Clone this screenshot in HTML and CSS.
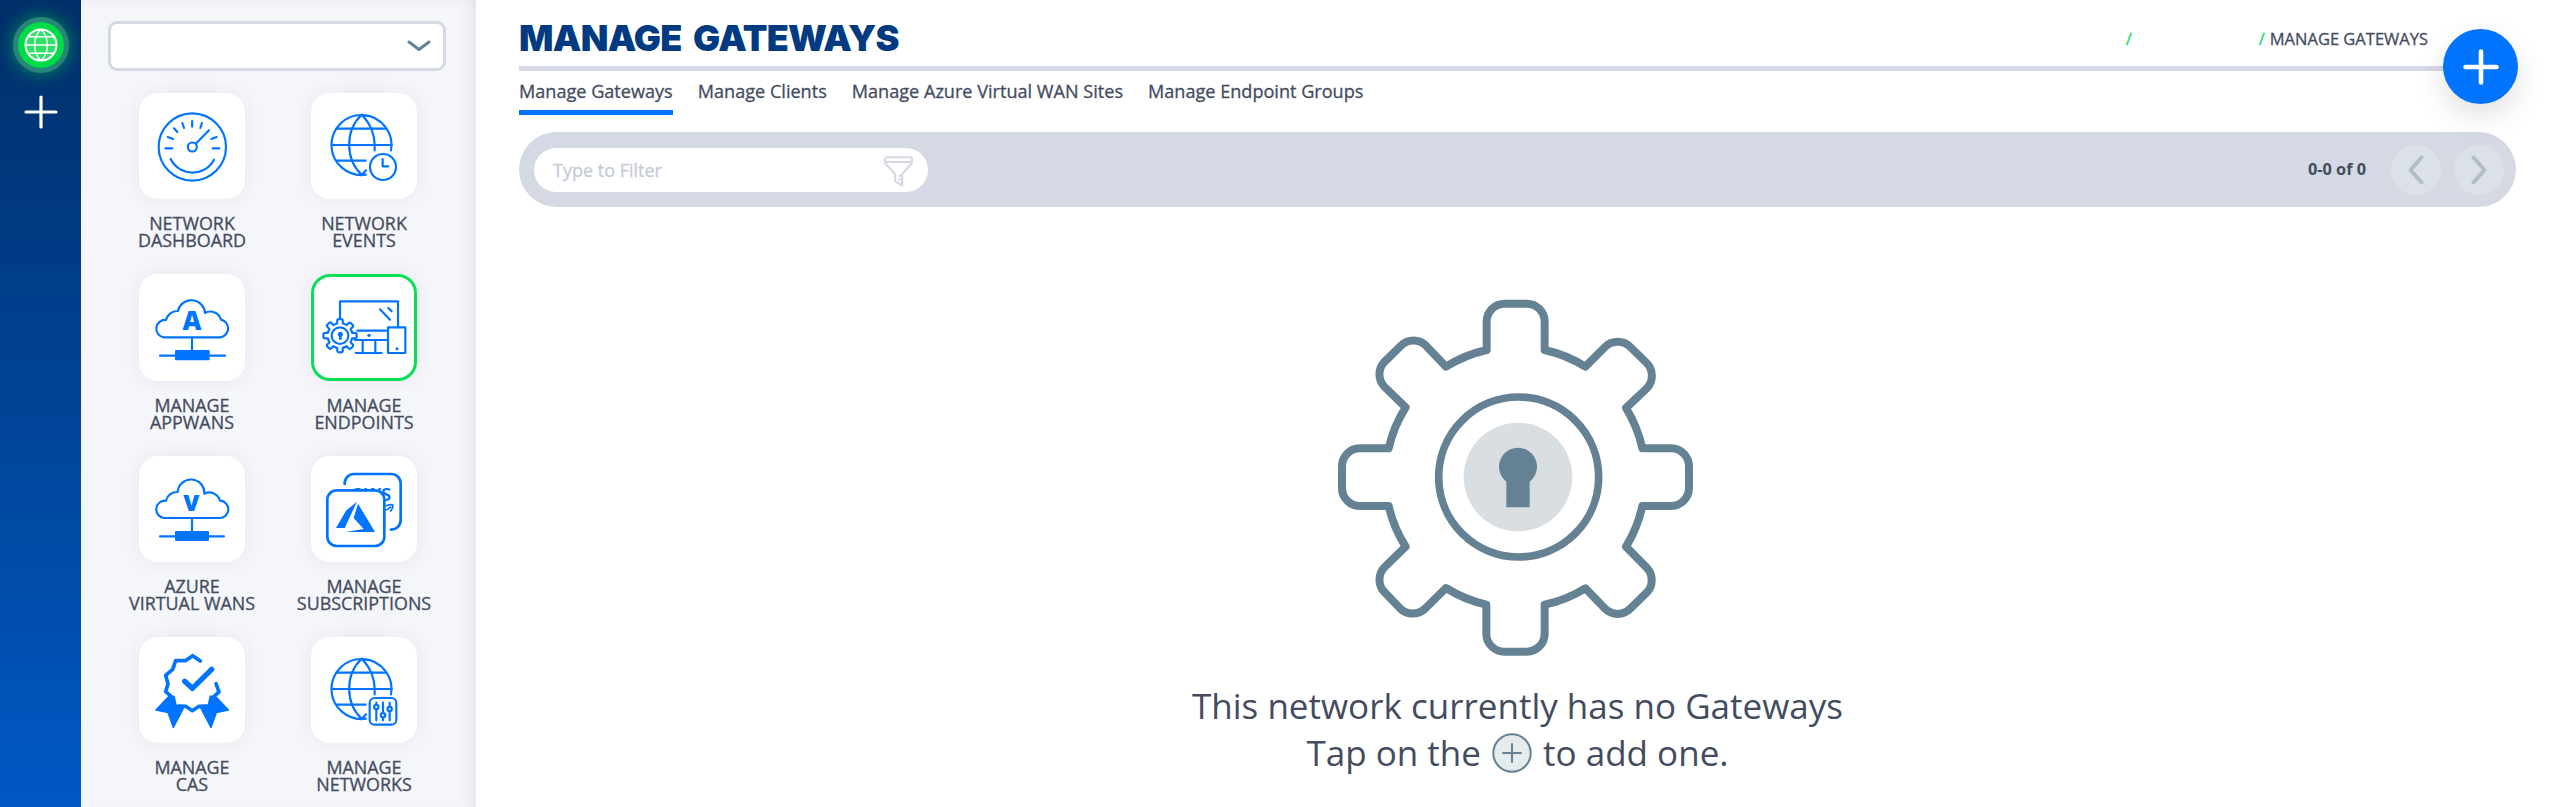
FILE: index.html
```
<!DOCTYPE html>
<html lang="en">
<head>
<meta charset="utf-8">
<title>Manage Gateways</title>
<link rel="stylesheet" href="styles.css">
</head>
<body>
<svg class="defs" aria-hidden="true">
  <defs>
    <path id="gear" d="M500 210V125A54 54 0 0 1 554 71H620A54 54 0 0 1 674 125V210A390 390 0 0 1 796 260L855 201A54 54 0 0 1 931 201L980 249A54 54 0 0 1 980 325L918 384A390 390 0 0 1 967 505H1054A54 54 0 0 1 1107 559V625A54 54 0 0 1 1054 678H967A390 390 0 0 1 918 800L980 863A54 54 0 0 1 980 938L931 986A54 54 0 0 1 855 986L796 925A390 390 0 0 1 674 974V1061A54 54 0 0 1 620 1115H554A54 54 0 0 1 499 1061V974A390 390 0 0 1 378 924L316 985A54 54 0 0 1 240 985L194 937A54 54 0 0 1 194 861L257 800A390 390 0 0 1 206 678H120A54 54 0 0 1 66 625V559A54 54 0 0 1 120 505H206A390 390 0 0 1 257 382L194 321A54 54 0 0 1 194 245L243 197A54 54 0 0 1 318 197L378 260A390 390 0 0 1 500 210Z"/>
    <g id="globe-cut">
      <path d="M240 172A90 90 0 1 0 165 245M77 107H227M61 156H243M77 203H164M152 65C102 112 102 198 152 245M152 65C180 93 193 130 191 172M165 232L155 243"/>
    </g>
  </defs>
</svg>
<div class="app">
  <nav class="rail">
    <div class="rail-globe">
      <svg viewBox="0 0 34 34" width="34" height="34">
        <circle cx="17" cy="17" r="15.5" fill="#fff" fill-opacity=".18"/>
        <path d="M17 1.5C8.500 9 8.500 25 17 32.500C25.500 25 25.500 9 17 1.500M1.500 17H32.500M4.500 8.800H29.500M4.500 25.200H29.500" stroke-width="1.500"/>
        <circle cx="17" cy="17" r="15.500" stroke-width="2"/>
      </svg>
    </div>
    <svg class="rail-plus" viewBox="0 0 34 34" width="34" height="34"><path d="M17 2V32M2 17H32" stroke-width="3.200"/></svg>
  </nav>

  <aside class="side">
    <div class="select">
      <svg viewBox="0 0 24 12" width="24" height="12"><path d="M2 2L12 9.500L22 2" stroke-width="3"/></svg>
    </div>
    <div class="menu">
      <div class="item">
        <div class="tile"><svg viewBox="0 0 318 318">
          <circle cx="160" cy="162" r="101"/><circle cx="160" cy="162" r="13.500"/>
          <path d="M170 152L210 112M159.500 84V101M189 90L184 105M130 90L135 105M105 106L115 117M86 132L102 138M233 132L217 138M79 166H100M221 166H241M95 198C122 252 198 252 225 200"/>
        </svg></div>
        <div class="label">NETWORK<br>DASHBOARD</div>
      </div>
      <div class="item">
        <div class="tile"><svg viewBox="0 0 318 318">
          <use href="#globe-cut"/><circle cx="216" cy="222" r="39"/><path d="M215 198V220H232"/>
        </svg></div>
        <div class="label">NETWORK<br>EVENTS</div>
      </div>
      <div class="item">
        <div class="tile tall"><svg viewBox="0 0 318 318">
          <path d="M75 190A26 26 0 0 1 81 138A35 35 0 0 1 117 111A41 41 0 0 1 198 117A33 33 0 0 1 246 137A27 27 0 0 1 245 190ZM159 190V230M63 245H258"/>
          <rect class="solid" x="108" y="228" width="104" height="31" rx="3"/>
          <text class="letter" x="158.500" y="169" font-size="78" text-anchor="middle">A</text>
        </svg></div>
        <div class="label">MANAGE<br>APPWANS</div>
      </div>
      <div class="item">
        <div class="tile tall active"><svg viewBox="0 0 318 318">
          <path d="M87 133V82H261V158M139 170H229M132 198H229M155 198V237M193 198V237M134 237H212M207 106L237 137M232 102L242 112"/>
          <rect x="231" y="160" width="52" height="77"/>
          <g class="solid"><circle cx="174" cy="184" r="5"/><circle cx="258" cy="224" r="4.500"/></g>
          <use href="#gear" transform="translate(31 128.400) scale(.0955)" fill="#fff" stroke-width="68"/>
          <circle cx="87" cy="185" r="25"/>
          <path class="solid" d="M84 197V188A8 8 0 1 1 92 188V197Z"/>
        </svg></div>
        <div class="label">MANAGE<br>ENDPOINTS</div>
      </div>
      <div class="item">
        <div class="tile"><svg viewBox="0 0 318 318">
          <path d="M75 186A26 26 0 0 1 81 134A34 34 0 0 1 116 108A40 40 0 0 1 196 113A33 33 0 0 1 243 134A26 26 0 0 1 241 186ZM159 186V228M63 241H255"/>
          <rect class="solid" x="108" y="225" width="102" height="30" rx="3"/>
          <text class="letter" x="157" y="165" font-size="70" text-anchor="middle">V</text>
        </svg></div>
        <div class="label">AZURE<br>VIRTUAL WANS</div>
      </div>
      <div class="item">
        <div class="tile"><svg viewBox="0 0 318 318">
          <path d="M101 84V82A28 28 0 0 1 129 54H241A28 28 0 0 1 269 82V193A28 28 0 0 1 240 221" stroke-width="8"/>
          <text class="aws" x="122" y="134" font-size="68" textLength="119" lengthAdjust="spacingAndGlyphs">aws</text>
          <path d="M218 163Q231 162 239 153M226 149Q242 143 246 148Q246 156 239 165" stroke-width="5"/>
          <rect x="49" y="103" width="171" height="167" rx="28" fill="#fff" stroke-width="8"/>
          <path class="solid" d="M138 137L105 164L75 216H101ZM141 143L192 228H104L158 219L128 186Z"/>
        </svg></div>
        <div class="label">MANAGE<br>SUBSCRIPTIONS</div>
      </div>
      <div class="item">
        <div class="tile"><svg viewBox="0 0 318 318">
          <path stroke-width="11" d="M184 72L161 56L139 71L110 71L101 97L80 115L87 140L80 164L94 176M119 207L140 208L160 221L180 208L203 207M231 140L240 165L228 175"/>
          <path stroke-width="16" d="M137 133L160 154L218 97"/>
          <path class="solid joined" d="M91 177L51 219L87 226L103 271L136 207L111 205L105 178ZM228 177L268 219L232 226L216 271L183 207L208 205L214 178Z"/>
        </svg></div>
        <div class="label">MANAGE<br>CAS</div>
      </div>
      <div class="item">
        <div class="tile"><svg viewBox="0 0 318 318">
          <use href="#globe-cut"/><rect x="176" y="183" width="80" height="80" rx="15"/>
          <path d="M196 197V202M196 217V250M216 197V227M216 242V250M236 197V208M236 223V250"/>
          <circle cx="196" cy="210" r="6.500"/><circle cx="216" cy="235" r="6.500"/><circle cx="236" cy="216" r="6.500"/>
        </svg></div>
        <div class="label">MANAGE<br>NETWORKS</div>
      </div>
    </div>
  </aside>

  <main class="main">
    <header class="head">
      <h1 class="title">MANAGE GATEWAYS</h1>
      <div class="crumbs"><i>/</i><i>/</i><span>MANAGE GATEWAYS</span></div>
      <button class="fab" aria-label="Add"><svg viewBox="0 0 36 36" width="36" height="36"><path d="M18 2.500V33.500M2.500 18H33.500" stroke-width="4.600"/></svg></button>
    </header>
    <div class="tabs">
      <span class="tab on">Manage Gateways</span>
      <span class="tab">Manage Clients</span>
      <span class="tab">Manage Azure Virtual WAN Sites</span>
      <span class="tab">Manage Endpoint Groups</span>
    </div>
    <div class="bar">
      <div class="filter">
        <span>Type to Filter</span>
        <svg viewBox="0 0 30 32" width="29" height="31"><path d="M2.500 1.200H27.500Q28.800 1.200 28.800 2.500V6.200H1.200V2.500Q1.200 1.200 2.500 1.200ZM1.200 6.200V7.500L11.500 18.500V26L18.800 30.500V18.500L28.800 7.500V6.200M18 20.500H15.500M18 24H15.500" stroke-width="2.200"/></svg>
      </div>
      <div class="pager">
        <b>0-0 of 0</b>
        <span class="page"><svg viewBox="0 0 16 30" width="16" height="30"><path d="M13.500 2.500L2.500 15L13.500 27.500" stroke-width="4"/></svg></span>
        <span class="page"><svg viewBox="0 0 16 30" width="16" height="30"><path d="M2.500 2.500L13.500 15L2.500 27.500" stroke-width="4"/></svg></span>
      </div>
    </div>
    <section class="empty">
      <svg class="gear" viewBox="0 0 1200 1200" width="400" height="400">
        <use href="#gear" stroke-width="24"/>
        <circle cx="596" cy="591" r="240" stroke-width="23"/>
        <circle cx="594" cy="591" r="163" fill="#d9dee2" stroke="none"/>
        <path d="M559 682V605A57 57 0 1 1 629 605V682Z" fill="#658294" stroke="none"/>
      </svg>
      <p class="msg">This network currently has no Gateways</p>
      <p class="msg">Tap on the <svg viewBox="0 0 40 40" width="40" height="40"><circle cx="20" cy="20" r="18.700" fill="#e6ebed" stroke-width="2"/><path d="M20 11V29M11 20H29" stroke-width="2"/></svg> to add one.</p>
    </section>
  </main>
</div>
</body>
</html>
```
FILE: styles.css
```
* { box-sizing: border-box; }
body { margin: 0; background: #fff; font-family: "Open Sans", "Noto Sans", sans-serif; color: #434c5f; }
svg { display: block; fill: none; stroke-linecap: round; stroke-linejoin: round; }
.defs { width: 0; height: 0; position: absolute; }
.app { display: flex; height: 807px; overflow: hidden; }

.rail { width: 81px; flex: none; display: flex; flex-direction: column; align-items: center; padding-top: 17px; background: linear-gradient(#002f69, #0058c4); }
.rail svg { stroke: #fff; }
.rail-globe { width: 56px; height: 56px; border-radius: 50%; border: 5px solid #278677; background: #00dc47; display: flex; align-items: center; justify-content: center; box-shadow: 0 0 18px rgba(0, 220, 71, .55); }
.rail-plus { margin: 22px 0 0 1px; }

.side { width: 395px; flex: none; padding: 21px 0 0 25px; background: #f5f6fa; box-shadow: inset -14px 0 16px -10px rgba(0, 0, 0, .08), inset 0 6px 12px -8px rgba(0, 0, 0, .06); }
.select { width: 338px; height: 50px; margin: 0 0 22px 2px; border: 3px solid #d4d9e3; border-radius: 9px; background: #fff; display: flex; align-items: center; justify-content: flex-end; padding: 0 12px; }
.select svg { stroke: #658294; }
.menu { display: grid; grid-template-columns: 172px 172px; grid-template-rows: 181px 182px 181px 181px; }
.item { display: flex; flex-direction: column; align-items: center; }
.tile { width: 106px; height: 106px; flex: none; border-radius: 19px; background: #fff; box-shadow: 0 0 18px rgba(60, 60, 80, .07); position: relative; }
.tile.tall { height: 107px; }
.tile svg { width: 106px; height: 106px; stroke: #0073ff; stroke-width: 6.500px; }
.tile.active { outline: 3px solid #0adf58; outline-offset: -3px; }
.solid { fill: #0073ff; stroke: none; }
.tile .joined { stroke: #0073ff; stroke-width: 5px; }
.letter { fill: #0073ff; stroke: none; font-weight: 800; }
.aws { fill: #0073ff; stroke: none; font-weight: 600; }
.label, .crumbs, .tab, .filter { font-weight: 500; -webkit-text-stroke: .3px currentColor; white-space: nowrap; }
.label { margin-top: 16px; text-align: center; font-size: 17.900px; line-height: 17px; }

.main { flex: 1; padding-left: 43px; }
.head { height: 71px; width: 1995px; border-bottom: 5px solid #d4d9e3; display: flex; justify-content: space-between; position: relative; }
.title { margin: 0; font: 900 36px/76px Inter, sans-serif; letter-spacing: -.700px; word-spacing: 5px; color: #003a80; white-space: nowrap; }
.crumbs { display: flex; font-size: 16.500px; line-height: 78px; margin-right: 86px; }
.crumbs i { font-style: normal; color: #0adf58; }
.crumbs i:first-child { margin-right: 127px; }
.crumbs span { margin-left: 5px; }
.fab { position: absolute; right: -4px; top: 29px; width: 75px; height: 75px; border: 0; padding: 0; border-radius: 50%; background: #0073ff; display: flex; align-items: center; justify-content: center; box-shadow: 0 12px 30px rgba(0, 0, 0, .12); z-index: 2; }
.fab svg { stroke: #fff; }
.tabs { display: flex; gap: 25px; height: 44px; }
.tab { height: 44px; font-size: 18.100px; line-height: 41px; }
.tab.on { border-bottom: 5px solid #0073ff; }
.bar { width: 1997px; height: 75px; margin-top: 17px; border-radius: 38px; background: #d4d9e3; display: flex; align-items: center; justify-content: space-between; padding: 0 12px 0 15px; }
.filter { width: 394px; height: 44px; border-radius: 22px; background: #fff; color: #c5cbd8; font-size: 18px; display: flex; align-items: center; justify-content: space-between; padding: 0 15px 0 19px; }
.filter svg { stroke: #d4d9e3; margin-top: 3px; }
.pager { display: flex; align-items: center; }
.pager b { font-size: 16.300px; font-weight: 700; margin: -2px 25px 0 0; }
.page { width: 50px; height: 50px; border-radius: 50%; background: #dce1e8; display: flex; align-items: center; justify-content: center; }
.page + .page { margin-left: 13px; }
.page svg { stroke: #b1bdc8; }
.empty { width: 1997px; margin-top: 73px; display: flex; flex-direction: column; align-items: center; }
.empty svg { stroke: #658294; }
.gear { margin-left: 5px; }
.msg { margin: 0; font-size: 35px; line-height: 47px; height: 47px; white-space: pre; display: flex; align-items: center; }
.gear + .msg { margin-top: 2px; }
.msg svg { margin: 0 2px; }
```
